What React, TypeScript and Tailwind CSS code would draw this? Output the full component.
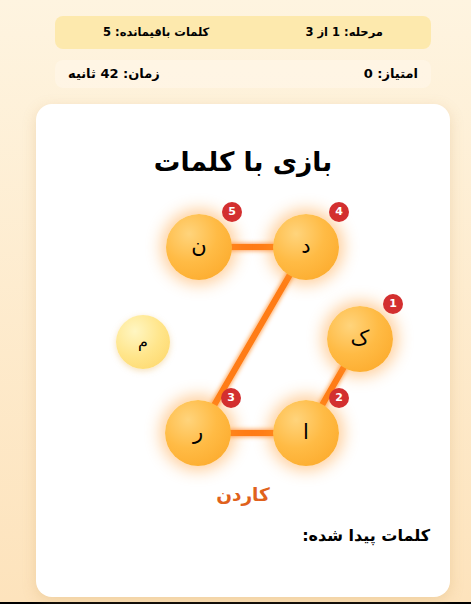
import React from 'react'

type Node = {
    ch: string
    x: number
    y: number
    order?: number
}

const nodes: Node[] = [
    { ch: 'ک', x: 324, y: 147, order: 1 },
    { ch: 'ا', x: 270, y: 241, order: 2 },
    { ch: 'ر', x: 162, y: 241, order: 3 },
    { ch: 'د', x: 270, y: 55, order: 4 },
    { ch: 'ن', x: 163, y: 55, order: 5 },
    { ch: 'م', x: 107, y: 150 },
]

const path = nodes.filter((n) => n.order).sort((a, b) => a.order! - b.order!)

export default function App() {
    return (
        <div
            dir="rtl"
            className="min-h-[604px] border-b-2 border-black bg-gradient-to-b from-[#fef4e0] to-[#fde3bc] flex flex-col items-center pt-4 pl-[15px]"
            style={{ fontFamily: '"DejaVu Sans", "Noto Sans", sans-serif' }}
        >
            <div className="w-[376px] h-[33px] rounded-lg bg-[#fde9ad] flex items-center justify-around text-[11.5px] font-bold text-black">
                <span>مرحله: 1 از 3</span>
                <span>کلمات باقیمانده: 5</span>
            </div>

            <div className="w-[376px] h-[28px] mt-[11px] rounded-lg bg-[#fff7ea]/60 flex items-center justify-between px-[13px] text-[13px] font-bold text-black">
                <span>امتیاز: 0</span>
                <span>زمان: 42 ثانیه</span>
            </div>

            <div className="w-[414px] h-[493px] mt-4 rounded-2xl bg-white shadow-[0_4px_14px_rgba(200,150,80,0.25)] flex flex-col">
                <h1 className="text-center text-[26.5px] font-bold text-black mt-[38px] leading-[40px]">
                    بازی با کلمات
                </h1>

                <div className="relative h-[288px] mt-[10px]">
                    <svg className="absolute inset-0" width="414" height="288">
                        <defs>
                            <filter id="glow" x="-50%" y="-50%" width="200%" height="200%">
                                <feGaussianBlur stdDeviation="2.5" result="b" />
                                <feMerge>
                                    <feMergeNode in="b" />
                                    <feMergeNode in="SourceGraphic" />
                                </feMerge>
                            </filter>
                        </defs>
                        <polyline
                            points={path.map((n) => `${n.x},${n.y}`).join(' ')}
                            fill="none"
                            stroke="#ff7c12"
                            strokeWidth="6"
                            strokeLinejoin="round"
                            filter="url(#glow)"
                        />
                    </svg>

                    {nodes.map((n) =>
                        n.order ? (
                            <div
                                key={n.ch}
                                className="absolute w-[66px] h-[66px] -ml-[33px] -mt-[33px] rounded-full flex items-center justify-center text-[21px] text-black bg-[radial-gradient(circle_at_35%_30%,#ffd47c_0%,#ffbb45_45%,#fba524_100%)] shadow-[0_0_15px_5px_rgba(255,150,40,0.45)]"
                                style={{ left: n.x, top: n.y }}
                            >
                                {n.ch}
                                <span className="absolute -top-[12px] -right-[10px] w-[20px] h-[20px] rounded-full bg-[#d32f2f] text-white text-[11px] font-bold flex items-center justify-center">
                                    {n.order}
                                </span>
                            </div>
                        ) : (
                            <div
                                key={n.ch}
                                className="absolute w-[54px] h-[54px] -ml-[27px] -mt-[27px] rounded-full flex items-center justify-center text-[16px] text-black bg-[radial-gradient(circle_at_35%_30%,#fff6c2_0%,#ffe58a_50%,#fdd465_100%)] shadow-[0_2px_6px_rgba(230,170,60,0.35)]"
                                style={{ left: n.x, top: n.y }}
                            >
                                {n.ch}
                            </div>
                        )
                    )}
                </div>

                <div className="text-center text-[18.5px] font-bold text-[#e0621c] leading-[30px]">
                    کاردن
                </div>

                <div className="px-5 mt-[13px] text-[16px] font-bold text-black leading-[26px]">
                    کلمات پیدا شده:
                </div>
            </div>
        </div>
    )
}
